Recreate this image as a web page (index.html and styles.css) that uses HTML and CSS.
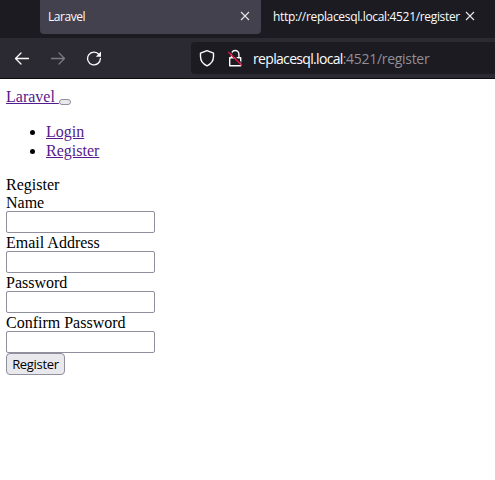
FILE: index.html
```html
<!DOCTYPE html>
<html lang="en">
<head>
<meta charset="utf-8">
<title>Register</title>
<link rel="stylesheet" href="styles.css">
</head>
<body>
<header class="chrome">
  <div class="tabs">
    <div class="tab tab-hover"><span class="tab-title laravel">Laravel</span>
      <svg class="close" viewBox="0 0 10 10"><path d="M1 1l8 8M9 1l-8 8"/></svg></div>
    <div class="tab"><span class="tab-title address">http://replacesql.local:4521/register</span>
      <svg class="close" viewBox="0 0 10 10"><path d="M1 1l8 8M9 1l-8 8"/></svg></div>
  </div>
  <div class="toolbar">
    <svg class="nav" viewBox="0 0 16 16"><path d="M14.500 8.500H1.800M7 3L1.500 8.500L7 14"/></svg>
    <svg class="nav disabled" viewBox="0 0 16 16"><path d="M1.500 8.500h12.700M9 3l5.500 5.500L9 14"/></svg>
    <svg class="nav reload" viewBox="0 0 16 16"><path d="M13 4.500A6.400 6.400 0 1 0 14.400 8.500"/><path class="solid" d="M15 1.500v5.200H9.800z"/></svg>
    <div class="urlbar">
      <svg class="shield" viewBox="0 0 16 18"><path d="M8 1.700L14.500 4.200V7.500C14.500 12 12 15 8 16.800C4 15 1.500 12 1.500 7.500V4.200z"/></svg>
      <svg class="lock" viewBox="0 0 16 18"><path d="M4.500 8.500V5.200a3.700 3.700 0 0 1 7.400 0v3.300M2.700 8.700h11v8h-11z"/><path class="gap" d="M2.500 2.200l13 13"/><path class="slash" d="M1.300 3l13.500 13.500"/></svg>
      <span class="url"><span class="host">replacesql.local</span><span class="dim">:4521/register</span></span>
    </div>
  </div>
</header>
<main>
  <nav>
    <div class="brand"><a href="#">Laravel </a><button class="toggle" type="button" aria-label="Menu"></button></div>
    <ul>
      <li><a href="#">Login</a></li>
      <li><a href="#">Register</a></li>
    </ul>
  </nav>
  <div class="line">Register</div>
  <form>
    <label for="name">Name</label>
    <input id="name" type="text">
    <label for="email">Email Address</label>
    <input id="email" type="email">
    <label for="password">Password</label>
    <input id="password" type="password">
    <label for="confirm">Confirm Password</label>
    <input id="confirm" type="password">
    <button class="submit" type="button">Register</button>
  </form>
</main>
</body>
</html>
```
FILE: styles.css
```css
* { box-sizing: border-box; }
body { margin: 0; background: #fff; color: #000; font: 16px/18px "Liberation Serif", serif; overflow: hidden; }
.chrome { color: #fbfbfe; font-family: "Open Sans", "Noto Sans", sans-serif; border-bottom: 1px solid #0c0c0d; }
.tabs { display: flex; gap: 4px; height: 38px; padding-left: 40px; background: #1c1b22; }
.tab { display: flex; align-items: center; justify-content: space-between; width: 221px; height: 34px; padding: 0 11px 2px 8px; }
.tab-hover { background: #42414d; border-radius: 0 0 4px 4px; }
.tab-title { padding-top: 2px; font-size: 12px; white-space: nowrap; }
.laravel { letter-spacing: -0.45px; }
.address { letter-spacing: -0.33px; }
.close { width: 10px; height: 10px; flex: none; stroke: #e8e8ec; stroke-width: 1.1; fill: none; }
.toolbar { display: flex; align-items: center; height: 40px; padding-left: 14px; background: #2b2a33; }
.nav { width: 16px; height: 16px; margin-right: 20px; flex: none; fill: none; stroke: #fbfbfe; stroke-width: 1.3; stroke-linecap: round; stroke-linejoin: round; }
.disabled { stroke: #7b7a80; }
.solid { fill: #fbfbfe; stroke: none; }
.urlbar { display: flex; align-items: center; flex: none; width: 320px; height: 32px; margin-left: 69px; padding-left: 8px; background: #1c1b22; border-radius: 4px; }
.shield, .lock { width: 16px; height: 18px; flex: none; fill: none; stroke: #fbfbfe; stroke-width: 1.4; stroke-linejoin: round; }
.lock { margin: 0 10px 0 12px; }
.lock .gap { stroke: #1c1b22; stroke-width: 1.2; }
.lock .slash { stroke: #e2143f; stroke-width: 1.5; }
.url { padding-top: 2px; font-size: 14px; white-space: nowrap; }
.host { letter-spacing: -0.67px; }
.dim { color: #8f8f96; letter-spacing: -0.3px; }
main { padding: 9px 6px; }
a { color: #551a8b; text-decoration: underline; }
.brand { display: flex; height: 18px; }
.brand a { white-space: pre; }
.toggle { width: 12px; height: 6px; margin-top: 11px; padding: 0; border: 1px solid #8f8f9d; border-radius: 3px; background: #e9e9ed; }
ul { margin: 16px 0 15px; padding-left: 40px; line-height: 19px; }
.line, label { display: block; height: 18px; line-height: 20px; }
form { display: flex; flex-direction: column; align-items: flex-start; }
input { width: 149px; height: 22px; margin: 0; padding: 1px 2px; border: 1px solid #8f8f9d; border-radius: 2px; background: #fff; }
.submit { width: 59px; height: 22px; padding: 0; border: 1px solid #8f8f9d; border-radius: 4px; background: #e9e9ed; color: #000; font: 13px/18px "Open Sans", sans-serif; letter-spacing: -0.3px; }
```
